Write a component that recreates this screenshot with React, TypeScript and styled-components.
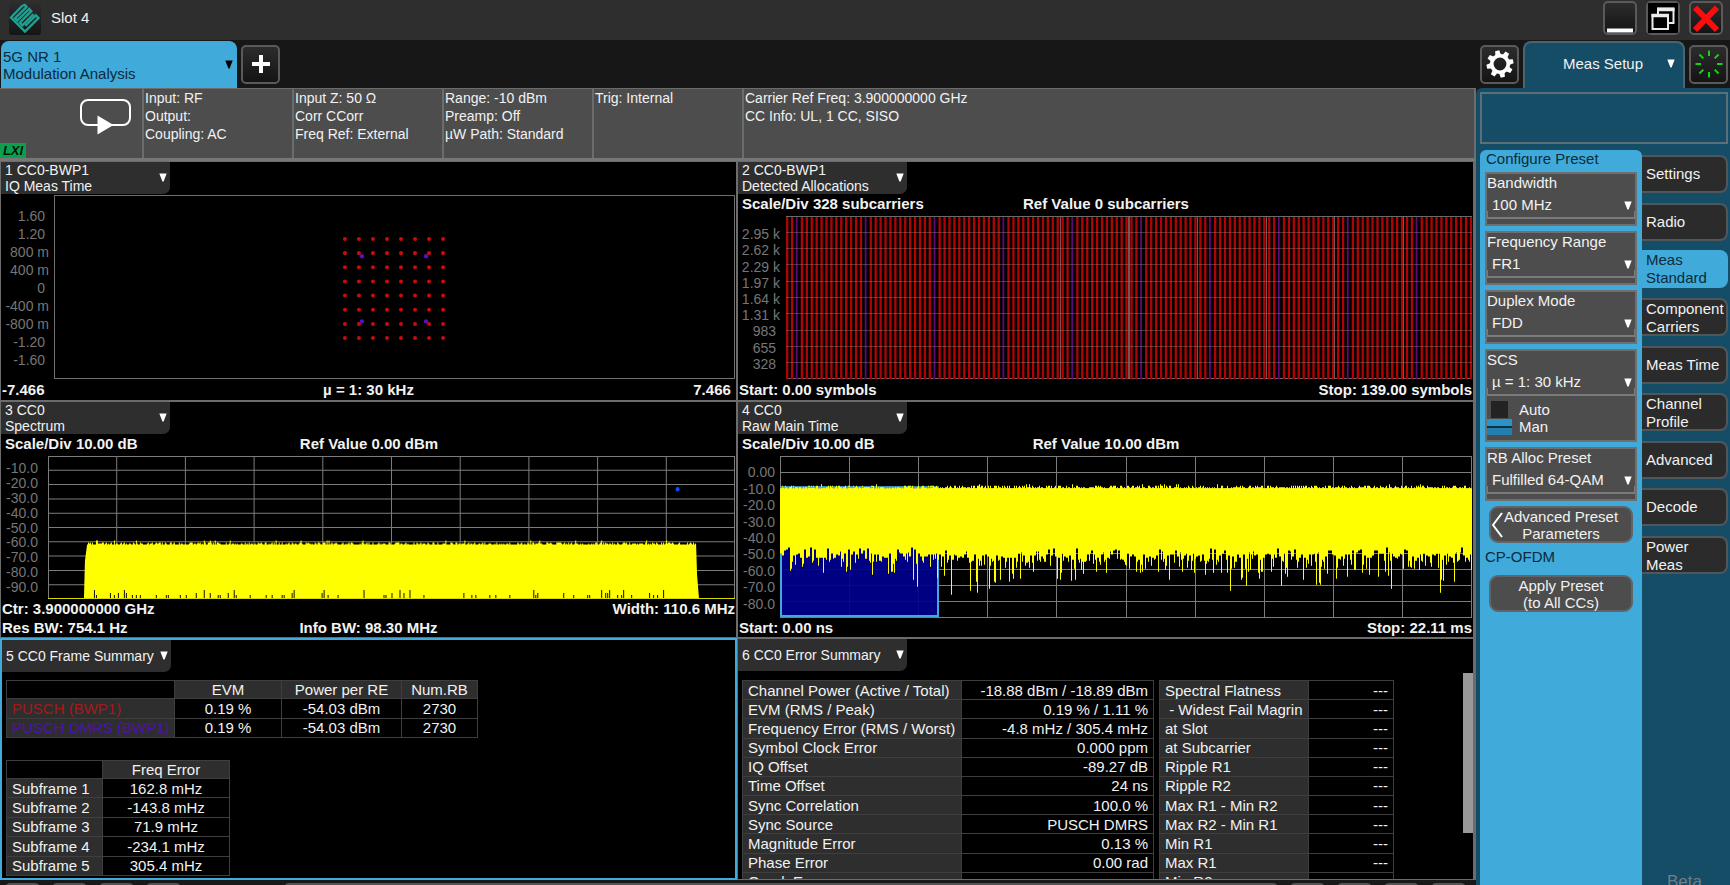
import React from "react";
import styled, { createGlobalStyle, css } from "styled-components";

const sky = "#40aadb";
const deep = "#154c66";
const line = "#6c6c6c";
const font = '"Liberation Sans", Arial, sans-serif';

const GlobalStyle = createGlobalStyle`
  * { box-sizing: border-box; }
  body { margin: 0; background: #171717; color: #f2f2f2; font: 15px/18px ${font}; }
  button, select, input { font: inherit; color: inherit; margin: 0; }
  button { cursor: pointer; padding: 0; }
`;

/* ---------- frame ---------- */

const Page = styled.div`
  display: flex;
  flex-direction: column;
  height: 100vh;
  overflow: hidden;
`;

const TitleBar = styled.header`
  display: flex;
  align-items: flex-start;
  flex: none;
  height: 40px;
  padding: 1px 7px 0 9px;
  background: #2e2e2e;
`;

const AppTitle = styled.h1`
  flex: 1;
  margin: 0 0 0 10px;
  font: 15px/34px ${font};
`;

const LogoBox = styled.span`
  display: flex;
  width: 32px;
  height: 32px;
  margin-top: 2px;
  border-radius: 3px;
  background: linear-gradient(#2c2c2c, #151515);
`;

const WindowControls = styled.div`
  display: flex;
  gap: 9px;
`;

const IconButton = styled.button<{ $size: number }>`
  display: flex;
  align-items: center;
  justify-content: center;
  flex: none;
  width: ${(p) => p.$size}px;
  height: ${(p) => p.$size}px;
  border: 2px solid #5a5a5a;
  border-radius: 5px;
  background: linear-gradient(#2c2c2c, #141414);
`;

const TabBar = styled.nav`
  display: flex;
  align-items: center;
  flex: none;
  gap: 4px;
  height: 48px;
  padding: 0 2px 0 1px;
  background: #171717;
`;

const AppTab = styled.button`
  display: flex;
  align-items: center;
  justify-content: space-between;
  align-self: flex-end;
  width: 236px;
  height: 47px;
  padding: 0 4px 0 2px;
  border: 0;
  border-radius: 8px 8px 0 0;
  background: ${sky};
  color: #0c2a3a;
  line-height: 17px;
  text-align: left;
`;

const Spacer = styled.span`
  flex: 1;
`;

const SetupTab = styled.button`
  display: flex;
  align-items: center;
  align-self: flex-end;
  width: 162px;
  height: 47px;
  padding: 0 8px 4px 0;
  border: 2px solid #4c6470;
  border-bottom: 0;
  border-radius: 8px 8px 0 0;
  background: ${deep};
  line-height: 18px;
`;

const SetupTabText = styled.span`
  flex: 1;
  padding-left: 14px;
`;

const Body = styled.div`
  display: flex;
  flex: 1;
  min-height: 0;
`;

const Main = styled.main`
  display: flex;
  flex-direction: column;
  flex: 1;
  min-width: 0;
`;

/* ---------- status strip ---------- */

const StatusBar = styled.section`
  display: flex;
  flex: none;
  height: 73px;
  border-top: 1px solid ${line};
  border-right: 2px solid ${line};
  border-bottom: 3px solid #777;
  background: #4d4d4d;
`;

const SweepCell = styled.div`
  display: flex;
  align-items: flex-end;
  width: 142px;
`;

const LxiBadge = styled.span`
  width: 26px;
  background: #0aa04e;
  color: #04140a;
  font: italic bold 13px/15px ${font};
  text-align: center;
`;

const SweepIcon = styled.svg`
  align-self: flex-start;
  width: 52px;
  height: 40px;
  margin: 9px 0 0 53px;
`;

const StatusCell = styled.div<{ $grow?: boolean }>`
  ${(p) => (p.$grow ? "flex: 1;" : "width: 150px;")}
  padding-left: 1px;
  border-left: 2px solid ${line};
  font-size: 14px;
  line-height: 18px;
  white-space: pre;
`;

/* ---------- measurement windows ---------- */

const Windows = styled.div`
  display: grid;
  grid-template-columns: 1fr 1fr;
  grid-template-rows: 240px 237px minmax(0, 1fr);
  flex: 1;
  min-height: 0;
  padding-right: 2px;
  background: ${line};
`;

const Pane = styled.section<{ $active?: boolean }>`
  display: flex;
  flex-direction: column;
  min-width: 0;
  min-height: 0;
  overflow: hidden;
  border: ${(p) => (p.$active ? `2px solid ${sky}` : `1px solid ${line}`)};
  background: #000;
`;

const PaneTab = styled.button`
  display: flex;
  align-items: center;
  justify-content: space-between;
  flex: none;
  width: 169px;
  height: 32px;
  padding: 0 3px 1px 4px;
  border: 0;
  border-radius: 0 0 7px 0;
  background: #2e2e2e;
  font-size: 14px;
  line-height: 16px;
  text-align: left;
`;

const PaneTitle = styled.span`
  white-space: pre;
`;

const Readout = styled.div<{ $height: number }>`
  display: grid;
  grid-template-columns: 1fr auto 1fr;
  align-items: center;
  flex: none;
  height: ${(p) => p.$height}px;
  padding: 0 1px;
  font-weight: bold;
  white-space: pre;
  & > :last-child { text-align: right; }
`;

const ScaleReadout = styled(Readout)`
  padding: 0 3px 2px 4px;
`;

const PlotRow = styled.div`
  display: flex;
  flex: 1;
  min-height: 0;
  padding-top: 1px;
  padding-right: 1px;
`;

const Axis = styled.div<{ $width: number; $gap: number; $top: number; $bottom: number }>`
  display: flex;
  flex-direction: column;
  flex: none;
  width: ${(p) => p.$width}px;
  margin-right: ${(p) => p.$gap}px;
  padding: ${(p) => p.$top}px 0 ${(p) => p.$bottom}px;
  color: #767676;
  font-size: 14px;
  text-align: right;
  white-space: pre;
`;

const AxisLabel = styled.span`
  display: flex;
  align-items: center;
  justify-content: flex-end;
  flex: 1;
  min-height: 0;
  line-height: 14px;
`;

const Plot = styled.svg`
  flex: 1;
  display: block;
  min-width: 0;
  width: 100%;
  height: 100%;
`;

/* ---------- tables ---------- */

const TableArea = styled.div<{ $row?: boolean }>`
  display: flex;
  flex: 1;
  flex-direction: ${(p) => (p.$row ? "row" : "column")};
  align-items: flex-start;
  gap: ${(p) => (p.$row ? "5px" : "22px")};
  min-height: 0;
  overflow: hidden;
  padding: ${(p) => (p.$row ? "9px 0 0 4px" : "8px 0 0 4px")};
`;

const DataTable = styled.table<{ $width: number; $height: number }>`
  flex: none;
  width: ${(p) => p.$width}px;
  height: ${(p) => p.$height}px;
  border-collapse: collapse;
  table-layout: fixed;
  border: 1px solid #3e3e3e;
  line-height: 17px;
  white-space: pre;
`;

const HeadCell = styled.th<{ $width?: number }>`
  ${(p) => p.$width && `width: ${p.$width}px;`}
  padding: 0;
  background: #2e2e2e;
  border: 1px solid #3e3e3e;
  font-weight: normal;
`;

const CornerCell = styled.td<{ $width: number }>`
  width: ${(p) => p.$width}px;
  padding: 0;
  background: #000;
`;

const RowHead = styled.th<{ $color?: string; $width?: number }>`
  ${(p) => p.$width && `width: ${p.$width}px;`}
  padding: 0 0 0 5px;
  background: #2e2e2e;
  border: 1px solid #3e3e3e;
  color: ${(p) => p.$color ?? "inherit"};
  font-weight: normal;
  text-align: left;
`;

const Cell = styled.td<{ $right?: boolean }>`
  padding: 0 ${(p) => (p.$right ? 5 : 0)}px 0 0;
  border: 1px solid #3e3e3e;
  text-align: ${(p) => (p.$right ? "right" : "center")};
`;

const ScrollThumb = styled.div`
  flex: none;
  width: 10px;
  height: 160px;
  margin: -7px 0 0 auto;
  background: #999;
`;

/* ---------- bottom strip ---------- */

const BottomStrip = styled.footer`
  display: flex;
  flex: none;
  gap: 12px;
  height: 5px;
  padding: 3px 10px 0 5px;
  overflow: hidden;
  background: #191919;
`;

const StripKey = styled.span<{ $wide?: boolean }>`
  ${(p) => (p.$wide ? "flex: 1; margin-left: 91px;" : "width: 35px;")}
  height: 20px;
  border: 2px solid #555;
  border-radius: 5px;
`;

/* ---------- setup panel ---------- */

const SetupPanel = styled.aside`
  display: flex;
  flex-direction: column;
  flex: none;
  width: 254px;
  padding: 4px 2px 0 4px;
  background: ${deep};
  border-radius: 6px 0 0 0;
`;

const MessageBox = styled.div`
  flex: none;
  height: 52px;
  border: 2px solid #5c6f78;
`;

const SetupBody = styled.div`
  display: flex;
  flex: 1;
  min-height: 0;
  margin-top: 6px;
`;

const ConfigPanel = styled.form`
  display: flex;
  flex-direction: column;
  gap: 5px;
  width: 162px;
  padding: 0 5px;
  border-radius: 6px 6px 0 0;
  background: ${sky};
`;

const ConfigTitle = styled.h2`
  height: 17px;
  margin: 0 1px;
  color: #0c2a3a;
  font: 15px/18px ${font};
`;

const Field = styled.div<{ $tall?: boolean }>`
  flex: none;
  height: ${(p) => (p.$tall ? 93 : 54)}px;
  border: 2px solid #6f6f6f;
  background: #4d4d4d;
`;

const FieldLabel = styled.label`
  display: block;
  line-height: 17px;
`;

const SelectWrap = styled.div`
  position: relative;
  display: flex;
  align-items: center;
  height: 28px;
  &::after {
    content: "";
    position: absolute;
    inset: auto 0 0 0;
    height: 6px;
    border: solid #7b7b7b;
    border-width: 0 1px 2px;
    pointer-events: none;
  }
`;

const Select = styled.select`
  width: 100%;
  height: 26px;
  padding: 0 0 0 5px;
  border: 0;
  background: transparent;
  appearance: none;
  outline: none;
`;

const ArrowSlot = styled.span`
  position: absolute;
  right: 3px;
  display: flex;
  pointer-events: none;
`;

const ToggleGroup = styled.div`
  display: flex;
  flex-direction: column;
  margin-top: 5px;
`;

const ToggleRow = styled.label`
  display: flex;
  align-items: center;
  height: 17px;
  line-height: 17px;
`;

const ToggleInput = styled.input<{ $thumb?: boolean }>`
  appearance: none;
  border-radius: 0;
  ${(p) =>
    p.$thumb
      ? css`
          width: 25px;
          height: 16px;
          margin-right: 7px;
          background: linear-gradient(#2a93c8 0 7px, #12303f 7px 9px, #2180b0 9px);
        `
      : css`
          width: 17px;
          height: 17px;
          margin: 0 11px 0 4px;
          background: #232323;
        `}
`;

const PresetButton = styled.button`
  position: relative;
  flex: none;
  height: 37px;
  margin: 0 4px;
  padding-bottom: 1px;
  border: 2px solid #5f6568;
  border-radius: 9px;
  background: #4d4d4d;
  line-height: 17px;
  white-space: pre;
`;

const BackChevron = styled.svg`
  position: absolute;
  left: 0;
  top: 4px;
`;

const WaveformNote = styled.p`
  height: 22px;
  margin: 0;
  color: #0c2a3a;
  line-height: 17px;
`;

const Rail = styled.div`
  display: flex;
  flex-direction: column;
  flex: 1;
  padding-top: 5px;
  min-height: 0;
`;

const RailTabs = styled.nav`
  display: flex;
  flex-direction: column;
  justify-content: space-between;
  flex: none;
  height: 419px;
`;

const RailTab = styled.button<{ $on?: boolean }>`
  height: 38px;
  padding: 0 0 0 4px;
  border: ${(p) => (p.$on ? "0" : "2px solid #50575b")};
  border-left: 0;
  border-radius: 0 8px 8px 0;
  background: ${(p) => (p.$on ? sky : "#2b2b2b")};
  color: ${(p) => (p.$on ? "#0c2a3a" : "inherit")};
  line-height: 18px;
  text-align: left;
  white-space: pre;
`;

const BetaTag = styled.span`
  flex: none;
  height: 13px;
  margin: auto 0 0 25px;
  color: #6d7f88;
  font-size: 17px;
  line-height: 20px;
`;

/* ---------- drawings ---------- */

const Arrow = ({ fill = "#fff" }: { fill?: string }) => (
  <svg width="8" height="9" viewBox="0 0 8 9" aria-hidden="true">
    <path d="M0.300 0.500H7.700L4.600 8.500H3.400Z" fill={fill} />
  </svg>
);

const Logo = () => (
  <svg width="32" height="32" viewBox="0 0 32 32" fill="none" stroke="#1fa091" strokeWidth="2.4">
    <path d="M13.500 2.500L2 14.500L16 28.500L29.500 15L26.800 12.300L16.300 22.800" />
    <path d="M13.500 2.500L16 2L17.500 4L6 15.300L8.200 17.600L20.200 6L22.300 8.200L10.800 19.700L13.500 22.300L24.500 11.200" />
  </svg>
);

const spokes = [0, 1, 2, 3, 4, 5, 6, 7];

const Gear = () => (
  <svg width="30" height="30" viewBox="-15 -15 30 30" aria-hidden="true">
    <circle r="8.300" fill="none" stroke="#fff" strokeWidth="3.800" />
    {spokes.map((k) => (
      <path key={k} d="M-2.700 -9.500L-2.100 -13.500H2.100L2.700 -9.500Z" fill="#fff" transform={`rotate(${k * 45 - 12})`} />
    ))}
  </svg>
);

const Burst = () => (
  <svg width="30" height="30" viewBox="-15 -15 30 30" aria-hidden="true">
    {spokes.map((k) => (
      <path key={k} d="M0 -13.500V-8" stroke="#12d412" strokeWidth="2" transform={`rotate(${k * 45})`} />
    ))}
  </svg>
);

function noise(seed: number) {
  let s = seed;
  return () => {
    s = (s * 1664525 + 1013904223) % 4294967296;
    return s / 4294967296;
  };
}

const steps = (count: number) => Array.from({ length: count }, (_, i) => i);

const Grid = ({ w, h, stroke = "#7c7c7c" }: { w: number; h: number; stroke?: string }) => (
  <g stroke={stroke} strokeWidth="1" shapeRendering="crispEdges" fill="none">
    <rect x="0.5" y="0.5" width={w - 1} height={h - 1} />
    {steps(9).map((i) => (
      <path key={i} d={`M${((i + 1) * w) / 10} 0V${h}M0 ${((i + 1) * h) / 10}H${w}`} />
    ))}
  </g>
);

const Constellation = () => (
  <Plot viewBox="0 0 680 182" preserveAspectRatio="none">
    <rect x="0.5" y="0.5" width="679" height="181" fill="none" stroke="#6f6f6f" />
    {steps(64).map((i) => (
      <circle key={i} cx={290.5 + (i % 8) * 14} cy={43.5 + Math.floor(i / 8) * 14} r="2" fill="#cc0a0a" />
    ))}
    {[[307.5, 60.5], [371.5, 60.5], [307.5, 125], [371.5, 125]].map(([x, y]) => (
      <circle key={`${x}-${y}`} cx={x} cy={y} r="2.200" fill="#5a0fc0" />
    ))}
  </Plot>
);

const Allocations = () => (
  <Plot viewBox="0 0 684 163" preserveAspectRatio="none">
    <rect x="0.5" y="0.5" width="683" height="162" fill="none" stroke="#6a6a6a" />
    {steps(140).map((i) => {
      const dmrs = i % 14 === 2;
      return (
        <rect
          key={i}
          x={i * 4.905}
          y="1"
          width={dmrs ? 1.8 : 2.3}
          height="162"
          fill={dmrs ? "#5c0a78" : "#b00404"}
        />
      );
    })}
    <g stroke="#8f6a6a" strokeOpacity="0.5" shapeRendering="crispEdges">
      {steps(9).map((i) => (
        <path key={i} d={`M0 ${(i + 1) * 16.3}H684`} />
      ))}
      {[4, 5, 6, 7, 8, 9].map((i) => (
        <path key={i} d={`M${i * 68.4} 0V163`} strokeOpacity="0.8" />
      ))}
    </g>
  </Plot>
);

const spectrumPath = (() => {
  const rnd = noise(7);
  let d = "M36 142L37 104L39 89";
  for (let x = 39; x < 649; x++) {
    const r = rnd();
    const y = r > 0.97 ? 84 : r > 0.75 ? 86 : r > 0.45 ? 87 : 88;
    d += `V${y}H${x + 1}`;
  }
  return d + "L650 118L652 142Z";
})();

const spectrumNotches = (() => {
  const rnd = noise(41);
  let d = "";
  for (let x = 44; x < 646; x += 2) {
    const r = rnd();
    if (r > 0.76) d += `M${x}.5 141V${r > 0.97 ? 133 : r > 0.9 ? 136 : 138}`;
  }
  return d;
})();

const Spectrum = () => (
  <Plot viewBox="0 0 688 142" preserveAspectRatio="none">
    <Grid w={688} h={142} />
    <path d={spectrumPath} fill="#ff0" />
    <path d={spectrumNotches} stroke="#111" />
    <path d="M0 141.500H688" stroke="#d8d800" />
    <ellipse cx="630.500" cy="33" rx="2" ry="2.200" fill="#0a50f0" />
  </Plot>
);

const timePath = (() => {
  const rnd = noise(19);
  let d = "M0 31";
  for (let x = 0; x < 692; x++) {
    const r = rnd();
    d += `V${r > 0.97 ? 28 : r > 0.7 ? 29.5 : r > 0.35 ? 31 : 32}H${x + 1}`;
  }
  let x = 692;
  while (x > 0) {
    const r = rnd();
    const t = rnd();
    const spike = r > 0.72;
    const y = r > 0.97 ? 124 + t * 14 : r > 0.88 ? 114 + t * 12 : spike ? 107 + t * 9 : r > 0.2 ? 97 + t * 9 : 91 + t * 7;
    x = Math.max(0, x - (spike || t > 0.5 ? 1 : 2));
    d += `V${Math.round(y)}H${x}`;
  }
  return d + "Z";
})();

const MainTime = () => (
  <Plot viewBox="0 0 692 161" preserveAspectRatio="none">
    <Grid w={692} h={161} />
    <rect x="1" y="31" width="157" height="128" fill="#00008c" fillOpacity="0.93" stroke={sky} strokeWidth="2" />
    <path d={timePath} fill="#ff0" />
    <path d="M2 31H157" stroke={sky} strokeDasharray="4 7 2 12 9 5" />
  </Plot>
);

/* ---------- data ---------- */

const statusCells = [
  "Input: RF\nOutput:\nCoupling: AC",
  "Input Z: 50 Ω\nCorr CCorr\nFreq Ref: External",
  "Range: -10 dBm\nPreamp: Off\nµW Path: Standard",
  "Trig: Internal",
];

const iqAxis = ["1.60 ", "1.20 ", "800 m", "400 m", "0 ", "-400 m", "-800 m", "-1.20 ", "-1.60 "];
const allocAxis = ["2.95 k", "2.62 k", "2.29 k", "1.97 k", "1.64 k", "1.31 k", "983 ", "655 ", "328 "];
const spectrumAxis = ["-10.0", "-20.0", "-30.0", "-40.0", "-50.0", "-60.0", "-70.0", "-80.0", "-90.0"];
const timeAxis = ["0.00", "-10.0", "-20.0", "-30.0", "-40.0", "-50.0", "-60.0", "-70.0", "-80.0"];

const frameRows = [
  { name: "PUSCH (BWP1)", color: "#a31a1a" },
  { name: "PUSCH DMRS (BWP1)", color: "#4d12ad" },
];

const subframes = ["162.8 mHz", "-143.8 mHz", "71.9 mHz", "-234.1 mHz", "305.4 mHz"];

const errorRows = [
  ["Channel Power (Active / Total)", "-18.88 dBm / -18.89 dBm"],
  ["EVM (RMS / Peak)", "0.19 % / 1.11 %"],
  ["Frequency Error (RMS / Worst)", "-4.8 mHz / 305.4 mHz"],
  ["Symbol Clock Error", "0.000 ppm"],
  ["IQ Offset", "-89.27 dB"],
  ["Time Offset", "24 ns"],
  ["Sync Correlation", "100.0 %"],
  ["Sync Source", "PUSCH DMRS"],
  ["Magnitude Error", "0.13 %"],
  ["Phase Error", "0.00 rad"],
  ["Quad. Error", "---"],
];

const flatnessRows = [
  "Spectral Flatness",
  " - Widest Fail Magrin",
  "at Slot",
  "at Subcarrier",
  "Ripple R1",
  "Ripple R2",
  "Max R1 - Min R2",
  "Max R2 - Min R1",
  "Min R1",
  "Max R1",
  "Min R2",
];

const railTabs = [
  "Settings",
  "Radio",
  "Meas\nStandard",
  "Component\nCarriers",
  "Meas Time",
  "Channel\nProfile",
  "Advanced",
  "Decode",
  "Power\nMeas",
];

/* ---------- composed parts ---------- */

const PaneHeader = ({ children }: { children: string }) => (
  <PaneTab type="button">
    <PaneTitle>{children}</PaneTitle>
    <Arrow />
  </PaneTab>
);

type AxisProps = { labels: string[]; width: number; gap: number; top: number; bottom: number };

const AxisScale = ({ labels, width, gap, top, bottom }: AxisProps) => (
  <Axis $width={width} $gap={gap} $top={top} $bottom={bottom}>
    {labels.map((t) => (
      <AxisLabel key={t}>{t}</AxisLabel>
    ))}
  </Axis>
);

const Triple = ({ height, left, mid = "", right = "" }: { height: number; left: string; mid?: string; right?: string }) => (
  <Readout $height={height}>
    <span>{left}</span>
    <span>{mid}</span>
    <span>{right}</span>
  </Readout>
);

const Scale = ({ left, mid }: { left: string; mid: string }) => (
  <ScaleReadout $height={21}>
    <span>{left}</span>
    <span>{mid}</span>
    <span />
  </ScaleReadout>
);

type SetupFieldProps = { id: string; label: string; value: string; children?: React.ReactNode };

const SetupField = ({ id, label, value, children }: SetupFieldProps) => (
  <Field $tall={Boolean(children)}>
    <FieldLabel htmlFor={id}>{label}</FieldLabel>
    <SelectWrap>
      <Select id={id} defaultValue={value}>
        <option>{value}</option>
      </Select>
      <ArrowSlot>
        <Arrow />
      </ArrowSlot>
    </SelectWrap>
    {children}
  </Field>
);

export default function App() {
  return (
    <Page>
      <GlobalStyle />
      <TitleBar>
        <LogoBox>
          <Logo />
        </LogoBox>
        <AppTitle>Slot 4</AppTitle>
        <WindowControls>
          <IconButton $size={34} type="button" aria-label="Minimize">
            <svg width="30" height="30">
              <path d="M2 27.500H28" stroke="#fff" strokeWidth="4" />
            </svg>
          </IconButton>
          <IconButton $size={34} type="button" aria-label="Restore">
            <svg width="30" height="30" fill="#000">
              <rect width="30" height="30" />
              <path d="M10 5.500H25.500V20H10Z" stroke="#ececec" strokeWidth="2" />
              <path d="M9 6.500H26.500" stroke="#ececec" strokeWidth="3.500" />
              <path d="M4.500 12H20V26H4.500Z" stroke="#ececec" strokeWidth="2" />
              <path d="M3.500 12.500H21" stroke="#ececec" strokeWidth="3.500" />
            </svg>
          </IconButton>
          <IconButton $size={34} type="button" aria-label="Close">
            <svg width="30" height="30">
              <path d="M4 4.500L26 27M26 4.500L4 27" stroke="#fb0d0d" strokeWidth="6" />
            </svg>
          </IconButton>
        </WindowControls>
      </TitleBar>

      <TabBar>
        <AppTab type="button">
          <span>
            5G NR 1<br />
            Modulation Analysis
          </span>
          <Arrow fill="#000" />
        </AppTab>
        <IconButton $size={39} type="button" aria-label="Add tab">
          <svg width="20" height="20">
            <path d="M10 1V19M1 10H19" stroke="#fff" strokeWidth="4" />
          </svg>
        </IconButton>
        <Spacer />
        <IconButton $size={39} type="button" aria-label="System settings">
          <Gear />
        </IconButton>
        <SetupTab type="button">
          <SetupTabText>Meas Setup</SetupTabText>
          <Arrow />
        </SetupTab>
        <IconButton $size={39} type="button" aria-label="Activity">
          <Burst />
        </IconButton>
      </TabBar>

      <Body>
        <Main>
          <StatusBar>
            <SweepCell>
              <LxiBadge>LXI</LxiBadge>
              <SweepIcon viewBox="0 0 52 40" aria-hidden="true">
                <rect x="2" y="2" width="49" height="25" rx="7" fill="none" stroke="#fff" strokeWidth="2" />
                <path d="M18.500 17.500L34.500 27L18.500 36.500Z" fill="#fff" />
              </SweepIcon>
            </SweepCell>
            {statusCells.map((t) => (
              <StatusCell key={t}>{t}</StatusCell>
            ))}
            <StatusCell $grow>{"Carrier Ref Freq: 3.900000000 GHz\nCC Info: UL, 1 CC, SISO"}</StatusCell>
          </StatusBar>

          <Windows>
            <Pane>
              <PaneHeader>{"1 CC0-BWP1\nIQ Meas Time"}</PaneHeader>
              <PlotRow>
                <AxisScale labels={iqAxis} width={48} gap={5} top={12} bottom={10} />
                <Constellation />
              </PlotRow>
              <Triple height={21} left="-7.466" mid="µ = 1: 30 kHz" right="7.466 " />
            </Pane>

            <Pane>
              <PaneHeader>{"2 CC0-BWP1\nDetected Allocations"}</PaneHeader>
              <Scale left="Scale/Div 328 subcarriers" mid="Ref Value 0 subcarriers" />
              <PlotRow>
                <AxisScale labels={allocAxis} width={42} gap={6} top={10} bottom={7} />
                <Allocations />
              </PlotRow>
              <Triple height={21} left="Start: 0.00 symbols" right="Stop: 139.00 symbols" />
            </Pane>

            <Pane>
              <PaneHeader>{"3 CC0\nSpectrum"}</PaneHeader>
              <Scale left="Scale/Div 10.00 dB" mid="Ref Value 0.00 dBm" />
              <PlotRow>
                <AxisScale labels={spectrumAxis} width={37} gap={10} top={5} bottom={5} />
                <Spectrum />
              </PlotRow>
              <Triple height={19} left="Ctr: 3.900000000 GHz" right="Width: 110.6 MHz" />
              <Triple height={19} left="Res BW: 754.1 Hz" mid="Info BW: 98.30 MHz" />
            </Pane>

            <Pane>
              <PaneHeader>{"4 CC0\nRaw Main Time"}</PaneHeader>
              <Scale left="Scale/Div 10.00 dB" mid="Ref Value 10.00 dBm" />
              <PlotRow>
                <AxisScale labels={timeAxis} width={37} gap={5} top={8} bottom={6} />
                <MainTime />
              </PlotRow>
              <Triple height={19} left="Start: 0.00 ns" right="Stop: 22.11 ms" />
            </Pane>

            <Pane $active>
              <PaneHeader>5 CC0 Frame Summary</PaneHeader>
              <TableArea>
                <DataTable $width={472} $height={58}>
                  <thead>
                    <tr>
                      <CornerCell $width={168} />
                      <HeadCell scope="col" $width={107}>EVM</HeadCell>
                      <HeadCell scope="col" $width={120}>Power per RE</HeadCell>
                      <HeadCell scope="col">Num.RB</HeadCell>
                    </tr>
                  </thead>
                  <tbody>
                    {frameRows.map((r) => (
                      <tr key={r.name}>
                        <RowHead scope="row" $color={r.color}>{r.name}</RowHead>
                        <Cell>0.19 %</Cell>
                        <Cell>-54.03 dBm</Cell>
                        <Cell>2730</Cell>
                      </tr>
                    ))}
                  </tbody>
                </DataTable>
                <DataTable $width={224} $height={116}>
                  <thead>
                    <tr>
                      <CornerCell $width={96} />
                      <HeadCell scope="col">Freq Error</HeadCell>
                    </tr>
                  </thead>
                  <tbody>
                    {subframes.map((v, i) => (
                      <tr key={v}>
                        <RowHead scope="row">{`Subframe ${i + 1}`}</RowHead>
                        <Cell>{v}</Cell>
                      </tr>
                    ))}
                  </tbody>
                </DataTable>
              </TableArea>
            </Pane>

            <Pane>
              <PaneHeader>6 CC0 Error Summary</PaneHeader>
              <TableArea $row>
                <DataTable $width={412} $height={212}>
                  <tbody>
                    {errorRows.map(([name, value]) => (
                      <tr key={name}>
                        <RowHead scope="row" $width={219}>{name}</RowHead>
                        <Cell $right>{value}</Cell>
                      </tr>
                    ))}
                  </tbody>
                </DataTable>
                <DataTable $width={235} $height={212}>
                  <tbody>
                    {flatnessRows.map((name) => (
                      <tr key={name}>
                        <RowHead scope="row" $width={149}>{name}</RowHead>
                        <Cell $right>---</Cell>
                      </tr>
                    ))}
                  </tbody>
                </DataTable>
                <ScrollThumb />
              </TableArea>
            </Pane>
          </Windows>

          <BottomStrip>
            <StripKey />
            <StripKey />
            <StripKey />
            <StripKey />
            <StripKey $wide />
            <StripKey />
            <StripKey />
            <StripKey />
            <StripKey />
          </BottomStrip>
        </Main>

        <SetupPanel>
          <MessageBox />
          <SetupBody>
            <ConfigPanel>
              <ConfigTitle>Configure Preset</ConfigTitle>
              <SetupField id="bandwidth" label="Bandwidth" value="100 MHz" />
              <SetupField id="range" label="Frequency Range" value="FR1" />
              <SetupField id="duplex" label="Duplex Mode" value="FDD" />
              <SetupField id="scs" label="SCS" value="µ = 1: 30 kHz">
                <ToggleGroup role="radiogroup" aria-label="SCS mode">
                  <ToggleRow>
                    <ToggleInput type="radio" name="scs-mode" />
                    Auto
                  </ToggleRow>
                  <ToggleRow>
                    <ToggleInput $thumb type="radio" name="scs-mode" defaultChecked />
                    Man
                  </ToggleRow>
                </ToggleGroup>
              </SetupField>
              <SetupField id="alloc" label="RB Alloc Preset" value="Fulfilled 64-QAM" />
              <PresetButton type="button">
                <BackChevron width="12" height="26" viewBox="0 0 12 26" fill="none" aria-hidden="true">
                  <path d="M11 1L2 13L11 25" stroke="#fff" strokeWidth="2" />
                </BackChevron>
                {"Advanced Preset\nParameters"}
              </PresetButton>
              <WaveformNote>CP-OFDM</WaveformNote>
              <PresetButton type="button">{"Apply Preset\n(to All CCs)"}</PresetButton>
            </ConfigPanel>
            <Rail>
              <RailTabs>
                {railTabs.map((t) => (
                  <RailTab key={t} type="button" $on={t.startsWith("Meas\n")}>
                    {t}
                  </RailTab>
                ))}
              </RailTabs>
              <BetaTag>Beta</BetaTag>
            </Rail>
          </SetupBody>
        </SetupPanel>
      </Body>
    </Page>
  );
}
